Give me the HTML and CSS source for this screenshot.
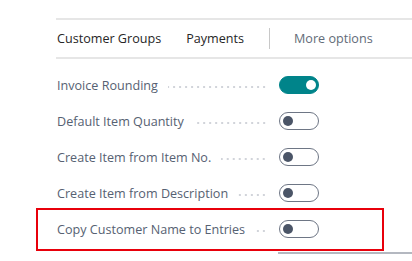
FILE: index.html
```html
<!DOCTYPE html>
<html lang="en">
<head>
    <meta charset="UTF-8">
    <meta name="viewport" content="width=device-width, initial-scale=1.0">
    <title>Sales & Receivables Setup</title>
    <link rel="stylesheet" href="styles.css">
</head>
<body>
    <div class="page">
        <div class="tabs">
            <span class="tab">Customer Groups</span>
            <span class="tab">Payments</span>
            <span class="tab-sep"></span>
            <span class="tab more">More options</span>
        </div>
        <div class="fields">
            <div class="field">
                <span class="label">Invoice Rounding</span>
                <span class="leader"></span>
                <span class="toggle on"><span class="knob"></span></span>
            </div>
            <div class="field">
                <span class="label">Default Item Quantity</span>
                <span class="leader"></span>
                <span class="toggle"><span class="knob"></span></span>
            </div>
            <div class="field">
                <span class="label">Create Item from Item No.</span>
                <span class="leader"></span>
                <span class="toggle"><span class="knob"></span></span>
            </div>
            <div class="field">
                <span class="label">Create Item from Description</span>
                <span class="leader"></span>
                <span class="toggle"><span class="knob"></span></span>
            </div>
            <div class="field highlight">
                <span class="label">Copy Customer Name to Entries</span>
                <span class="leader"></span>
                <span class="toggle"><span class="knob"></span></span>
            </div>
        </div>
        <div class="bottom-line"></div>
    </div>
</body>
</html>
```
FILE: styles.css
```css
body, html {
    margin: 0;
    padding: 0;
    background: #fff;
    font-family: "Open Sans", "Noto Sans", sans-serif;
    font-size: 12.6px;
    color: #566172;
}
.page {
    padding-top: 18px;
    margin-left: 56px;
}
.tabs {
    display: flex;
    align-items: center;
    height: 37px;
    border-top: 2px solid #e6e6e6;
    border-bottom: 2px solid #e6e6e6;
    padding-left: 1px;
    color: #262626;
}
.tab {
    margin-right: 25px;
}
.tab-sep {
    width: 1px;
    height: 21px;
    background: #c8c8c8;
    margin-right: 24px;
}
.tab.more {
    color: #626b78;
}
.fields {
    padding-top: 8px;
    padding-left: 1px;
}
.field {
    display: flex;
    align-items: center;
    height: 36px;
    width: 262px;
    position: relative;
}
.label {
    white-space: nowrap;
}
.leader {
    flex: 1;
    height: 2px;
    margin: 4px 12px 0 10px;
    background-image: radial-gradient(circle, #d0d3d9 0.7px, transparent 1px);
    background-size: 6px 2px;
    background-position: right center;
}
.toggle {
    box-sizing: border-box;
    width: 40px;
    height: 18px;
    border: 1.5px solid #6e7685;
    border-radius: 9px;
    position: relative;
    flex: none;
}
.knob {
    position: absolute;
    top: 2.5px;
    left: 3px;
    width: 10px;
    height: 10px;
    border-radius: 50%;
    background: #4b5567;
}
.toggle.on {
    background: #00848a;
    border-color: #00848a;
}
.toggle.on .knob {
    left: auto;
    right: 2.5px;
    background: #fff;
}
.highlight::after {
    content: "";
    position: absolute;
    top: -3px;
    bottom: -4px;
    left: -21px;
    right: -65px;
    border: 2px solid #e8000b;
}
.bottom-line {
    margin-top: 5px;
    margin-left: 222px;
    height: 2px;
    background: #b4b8c0;
}
```
